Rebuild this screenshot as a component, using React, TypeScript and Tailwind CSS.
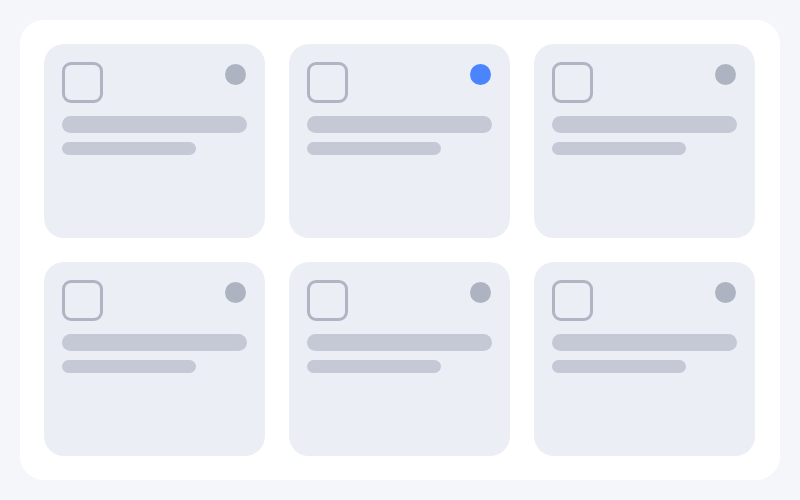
import React from 'react';

type Tile = { id: number; active?: boolean };

const tiles: Tile[] = [
  { id: 1 },
  { id: 2, active: true },
  { id: 3 },
  { id: 4 },
  { id: 5 },
  { id: 6 },
];

function SkeletonCard({ active }: { active?: boolean }) {
  return (
    <div className="flex flex-col rounded-[20px] bg-[#eceef6] p-[18px]">
      <div className="flex items-start justify-between">
        <div className="h-[41px] w-[41px] rounded-[9px] border-[3px] border-[#afb5c3]" />
        <div
          className={`mr-px mt-[2px] h-[21px] w-[21px] rounded-full ${
            active ? 'bg-[#4a84ff]' : 'bg-[#adb3c0]'
          }`}
        />
      </div>
      <div className="mt-[13px] h-[17px] w-full rounded-full bg-[#c4c9d5]" />
      <div className="mt-[9px] h-[13px] w-[134px] rounded-full bg-[#c4c9d5]" />
    </div>
  );
}

export default function App() {
  return (
    <main className="h-[500px] w-[800px] bg-[#f5f6fa] p-5">
      <div className="grid h-full grid-cols-[221px_221px_221px] grid-rows-2 gap-6 rounded-3xl bg-white p-6">
        {tiles.map((t) => (
          <SkeletonCard key={t.id} active={t.active} />
        ))}
      </div>
    </main>
  );
}
